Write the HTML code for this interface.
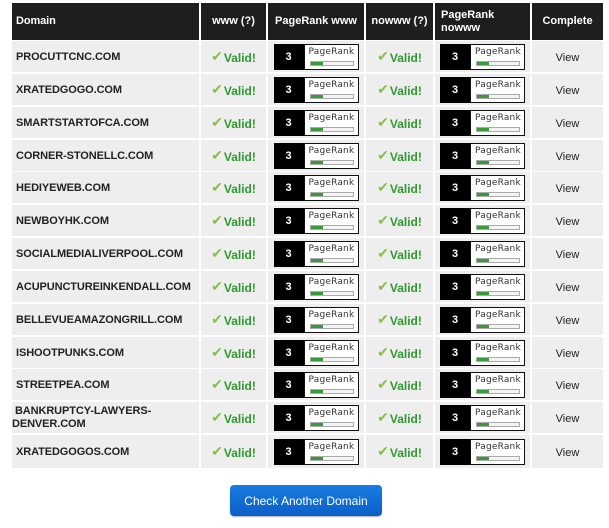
<!DOCTYPE html>
<html><head><meta charset="utf-8"><style>
body{margin:0;background:#fff;width:609px;height:528px;position:relative;overflow:hidden;font-family:"Liberation Sans",Arial,sans-serif}
.r{position:absolute;left:12px;display:grid;grid-template-columns:187px 65px 96px 67px 95px 71px;column-gap:2px;height:31px}
.r>div{background:#eeeeee;display:flex;align-items:center;justify-content:center;font-size:11px;color:#222;padding-top:2px;box-sizing:border-box}
.r>div.d{justify-content:flex-start;padding-left:4px;font-weight:bold;font-size:11px;letter-spacing:-0.1px;line-height:13px}
.h>div{background:#1e1e1e;color:#fff;font-weight:bold;font-size:11px;line-height:13px;padding-top:0}
.h>div.d{color:#fff}
.v{color:#2f9a2f;font-weight:bold;font-size:12px}
.ck{color:#86c04a;font-size:14px;margin-right:1px;position:relative;top:-1px}
.b{width:85px;height:26px;display:flex;box-sizing:border-box;margin-top:-2px}
.b .n{width:30px;background:#000;color:#fff;font-weight:bold;font-size:11px;display:flex;align-items:center;justify-content:center}
.b .w{flex:1;background:#fff;border:1px solid #111;position:relative}
.b .w span{position:absolute;left:4px;top:2px;font-size:9px;color:#333;font-family:"DejaVu Sans",sans-serif;letter-spacing:0.2px}
.b .w i{position:absolute;left:5px;top:16px;width:42px;height:3px;border:1px solid #aaa;background:#f4f4f4}
.b .w i b{display:block;width:12px;height:3px;background:#3a9a3a}
.btn{position:absolute;left:230px;top:485px;width:152px;height:31px;border-radius:4px;background:linear-gradient(#1a7be0,#0a5fc8);color:#fff;font-size:12px;display:flex;align-items:center;justify-content:center;box-shadow:0 1px 1px rgba(0,0,0,.3)}
</style></head><body>
<div class="r h" style="top:3px;height:37px"><div class="d">Domain</div><div>www (?)</div><div>PageRank www</div><div>nowww (?)</div><div style="justify-content:flex-start;padding-left:6px">PageRank<br>nowww</div><div>Complete</div></div>

<div class="r" style="top:41px"><div class="d">PROCUTTCNC.COM</div><div><span class="ck">✔</span><span class="v">Valid!</span></div><div><div class="b"><div class="n">3</div><div class="w"><span>PageRank</span><i><b></b></i></div></div></div><div><span class="ck">✔</span><span class="v">Valid!</span></div><div><div class="b"><div class="n">3</div><div class="w"><span>PageRank</span><i><b></b></i></div></div></div><div>View</div></div>
<div class="r" style="top:74px"><div class="d">XRATEDGOGO.COM</div><div><span class="ck">✔</span><span class="v">Valid!</span></div><div><div class="b"><div class="n">3</div><div class="w"><span>PageRank</span><i><b></b></i></div></div></div><div><span class="ck">✔</span><span class="v">Valid!</span></div><div><div class="b"><div class="n">3</div><div class="w"><span>PageRank</span><i><b></b></i></div></div></div><div>View</div></div>
<div class="r" style="top:107px"><div class="d">SMARTSTARTOFCA.COM</div><div><span class="ck">✔</span><span class="v">Valid!</span></div><div><div class="b"><div class="n">3</div><div class="w"><span>PageRank</span><i><b></b></i></div></div></div><div><span class="ck">✔</span><span class="v">Valid!</span></div><div><div class="b"><div class="n">3</div><div class="w"><span>PageRank</span><i><b></b></i></div></div></div><div>View</div></div>
<div class="r" style="top:140px"><div class="d">CORNER-STONELLC.COM</div><div><span class="ck">✔</span><span class="v">Valid!</span></div><div><div class="b"><div class="n">3</div><div class="w"><span>PageRank</span><i><b></b></i></div></div></div><div><span class="ck">✔</span><span class="v">Valid!</span></div><div><div class="b"><div class="n">3</div><div class="w"><span>PageRank</span><i><b></b></i></div></div></div><div>View</div></div>
<div class="r" style="top:172px"><div class="d">HEDIYEWEB.COM</div><div><span class="ck">✔</span><span class="v">Valid!</span></div><div><div class="b"><div class="n">3</div><div class="w"><span>PageRank</span><i><b></b></i></div></div></div><div><span class="ck">✔</span><span class="v">Valid!</span></div><div><div class="b"><div class="n">3</div><div class="w"><span>PageRank</span><i><b></b></i></div></div></div><div>View</div></div>
<div class="r" style="top:205px"><div class="d">NEWBOYHK.COM</div><div><span class="ck">✔</span><span class="v">Valid!</span></div><div><div class="b"><div class="n">3</div><div class="w"><span>PageRank</span><i><b></b></i></div></div></div><div><span class="ck">✔</span><span class="v">Valid!</span></div><div><div class="b"><div class="n">3</div><div class="w"><span>PageRank</span><i><b></b></i></div></div></div><div>View</div></div>
<div class="r" style="top:238px"><div class="d">SOCIALMEDIALIVERPOOL.COM</div><div><span class="ck">✔</span><span class="v">Valid!</span></div><div><div class="b"><div class="n">3</div><div class="w"><span>PageRank</span><i><b></b></i></div></div></div><div><span class="ck">✔</span><span class="v">Valid!</span></div><div><div class="b"><div class="n">3</div><div class="w"><span>PageRank</span><i><b></b></i></div></div></div><div>View</div></div>
<div class="r" style="top:271px"><div class="d">ACUPUNCTUREINKENDALL.COM</div><div><span class="ck">✔</span><span class="v">Valid!</span></div><div><div class="b"><div class="n">3</div><div class="w"><span>PageRank</span><i><b></b></i></div></div></div><div><span class="ck">✔</span><span class="v">Valid!</span></div><div><div class="b"><div class="n">3</div><div class="w"><span>PageRank</span><i><b></b></i></div></div></div><div>View</div></div>
<div class="r" style="top:304px"><div class="d">BELLEVUEAMAZONGRILL.COM</div><div><span class="ck">✔</span><span class="v">Valid!</span></div><div><div class="b"><div class="n">3</div><div class="w"><span>PageRank</span><i><b></b></i></div></div></div><div><span class="ck">✔</span><span class="v">Valid!</span></div><div><div class="b"><div class="n">3</div><div class="w"><span>PageRank</span><i><b></b></i></div></div></div><div>View</div></div>
<div class="r" style="top:337px"><div class="d">ISHOOTPUNKS.COM</div><div><span class="ck">✔</span><span class="v">Valid!</span></div><div><div class="b"><div class="n">3</div><div class="w"><span>PageRank</span><i><b></b></i></div></div></div><div><span class="ck">✔</span><span class="v">Valid!</span></div><div><div class="b"><div class="n">3</div><div class="w"><span>PageRank</span><i><b></b></i></div></div></div><div>View</div></div>
<div class="r" style="top:369px"><div class="d">STREETPEA.COM</div><div><span class="ck">✔</span><span class="v">Valid!</span></div><div><div class="b"><div class="n">3</div><div class="w"><span>PageRank</span><i><b></b></i></div></div></div><div><span class="ck">✔</span><span class="v">Valid!</span></div><div><div class="b"><div class="n">3</div><div class="w"><span>PageRank</span><i><b></b></i></div></div></div><div>View</div></div>
<div class="r" style="top:402px"><div class="d" style="padding-left:0;display:block;padding-top:3px">&nbsp;BANKRUPTCY-LAWYERS-<br>DENVER.COM</div><div><span class="ck">✔</span><span class="v">Valid!</span></div><div><div class="b"><div class="n">3</div><div class="w"><span>PageRank</span><i><b></b></i></div></div></div><div><span class="ck">✔</span><span class="v">Valid!</span></div><div><div class="b"><div class="n">3</div><div class="w"><span>PageRank</span><i><b></b></i></div></div></div><div>View</div></div>
<div class="r" style="top:435px;height:33px"><div class="d">XRATEDGOGOS.COM</div><div><span class="ck">✔</span><span class="v">Valid!</span></div><div><div class="b"><div class="n">3</div><div class="w"><span>PageRank</span><i><b></b></i></div></div></div><div><span class="ck">✔</span><span class="v">Valid!</span></div><div><div class="b"><div class="n">3</div><div class="w"><span>PageRank</span><i><b></b></i></div></div></div><div>View</div></div>

<div class="btn">Check Another Domain</div>
</body></html>
